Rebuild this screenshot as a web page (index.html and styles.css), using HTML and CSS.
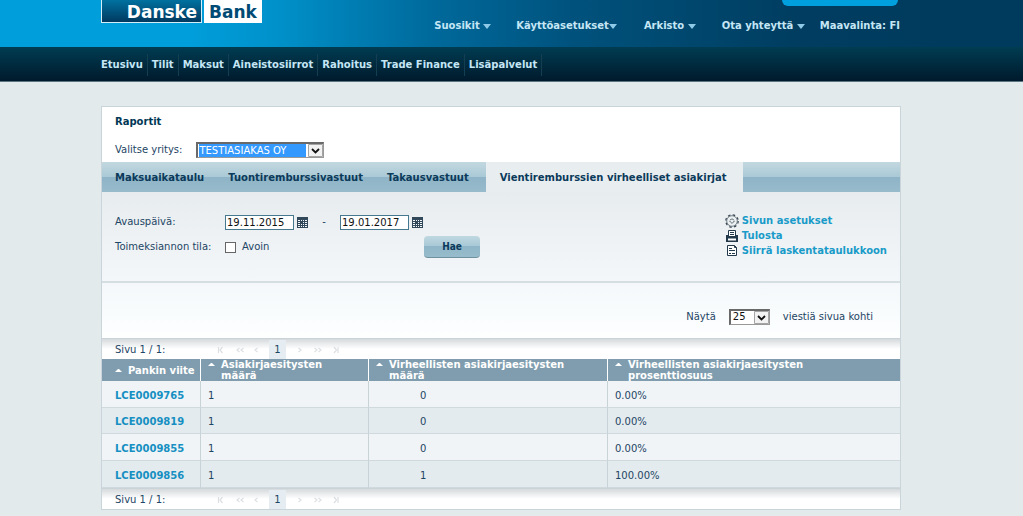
FILE: index.html
```html
<!DOCTYPE html>
<html lang="fi">
<head>
<meta charset="utf-8">
<title>Danske Bank - Raportit</title>
<link rel="stylesheet" href="styles.css">
</head>
<body>
<svg class="defs" aria-hidden="true">
  <symbol id="calendar" viewBox="0 0 11 11"><path d="M0 0h11v11H0z" fill="#31485b"/><path d="M1 3h2v1H1zm3 0h1v1H4zm2 0h1v1H6zm2 0h2v1H8zM1 5h2v1H1zm5 0h1v1H6zm2 0h2v1H8zM1 7h2v1H1zm3 0h1v1H4zm2 0h1v1H6zm2 0h2v1H8zM1 9h2v1H1zm3 0h1v1H4zm2 0h1v1H6zm2 0h2v1H8z" fill="#f4f8fa"/></symbol>
  <symbol id="chevron" viewBox="0 0 15 13"><path d="M.5.5h14v12H.5z" fill="#f2f2f2" stroke="#a5a5a5"/><path d="M4 5l3.500 3.500L11 5" fill="none" stroke="#111" stroke-width="1.800"/></symbol>
  <symbol id="pager" viewBox="0 0 122 8"><g fill="none" stroke="#dcdfe2" stroke-width="1.200"><path d="M1.500 1v6M5.500 1L3 4l2.500 3M22.500 2L20 4l2.500 2M26.500 2L24 4l2.500 2M40.500 2L38 4l2.500 2M81.500 2L84 4l-2.500 2M97.500 2l2.500 2-2.500 2M101.500 2l2.500 2-2.500 2M117 1l2.500 3L117 7M121 1v6"/></g></symbol>
</svg>
<header class="top">
  <div class="wrap top-row">
    <a class="logo" href="#"><span class="logo-danske">Danske</span><span class="logo-bank">Bank</span></a>
    <div class="top-right">
      <span class="logoff"></span>
      <nav class="tools">
        <a class="t1" href="#">Suosikit <i class="down"></i></a>
        <a class="t2" href="#">Käyttöasetukset<i class="down"></i></a>
        <a class="t3" href="#">Arkisto <i class="down"></i></a>
        <a class="t4" href="#">Ota yhteyttä <i class="down"></i></a>
        <a href="#">Maavalinta: FI</a>
      </nav>
    </div>
  </div>
</header>
<div class="mainnav">
  <nav class="wrap links">
    <a href="#">Etusivu</a><a href="#">Tilit</a><a href="#">Maksut</a><a href="#">Aineistosiirrot</a><a href="#">Rahoitus</a><a href="#">Trade Finance</a><a href="#">Lisäpalvelut</a>
  </nav>
</div>
<div class="wrap">
  <main class="panel">
    <section class="head">
      <h1>Raportit</h1>
      <div class="company">
        <label for="company">Valitse yritys:</label>
        <span class="pick"><select id="company" class="wide"><option>TESTIASIAKAS OY</option></select><svg class="chev"><use href="#chevron"/></svg></span>
      </div>
    </section>
    <nav class="tabs">
      <a href="#">Maksuaikataulu</a><a href="#">Tuontiremburssivastuut</a><a href="#">Takausvastuut</a><a class="active" href="#">Vientiremburssien virheelliset asiakirjat</a>
    </nav>
    <section class="filter">
      <form class="fields">
        <div class="field-row">
          <label class="lab" for="from">Avauspäivä:</label>
          <input class="date" id="from" type="text" value="19.11.2015"><button class="cal" type="button" aria-label="Kalenteri"><svg><use href="#calendar"/></svg></button>
          <span class="dash">-</span>
          <input class="date" type="text" aria-label="Avauspäivä" value="19.01.2017"><button class="cal" type="button" aria-label="Kalenteri"><svg><use href="#calendar"/></svg></button>
        </div>
        <div class="field-row second">
          <span class="lab">Toimeksiannon tila:</span>
          <input class="tick" id="open" type="checkbox"><label class="open" for="open">Avoin</label>
          <button class="search" type="button">Hae</button>
        </div>
      </form>
      <div class="actions">
        <a href="#"><svg viewBox="0 0 14 14"><g fill="none" stroke="#33414d"><circle cx="7" cy="7" r="6.200" stroke-width="1.200" stroke-dasharray="2.500 2.370"/><circle cx="7" cy="7" r="5.300" stroke="#56636d" stroke-width=".8"/><circle cx="7" cy="7" r="2" stroke-dasharray="1.500 .7"/></g></svg>Sivun asetukset</a>
        <a href="#"><svg viewBox="0 0 14 14"><path d="M3.500 8V1.500h7V8" fill="#fff" stroke="#24394b"/><path d="M5 3.500h4M5 5.500h4M4 7.500h6" stroke="#24394b"/><path d="M1 6h2v2h8V6h2v7H1z" fill="#24394b"/><path d="M3 9.500h8v2H3z" fill="#fff"/></svg>Tulosta</a>
        <a href="#"><svg viewBox="0 0 14 14"><path d="M2.500 1.500h7l2 2v8h-9z" fill="#fff" stroke="#24394b"/><path d="M9.500 1.500v2h2M4 4.500h3M4 6.500h6M4 9.500h2M7 9.500h3" fill="none" stroke="#24394b"/></svg>Siirrä laskentataulukkoon</a>
      </div>
    </section>
    <section class="perpage">
      <label for="count">Näytä</label>
      <span class="pick"><select id="count"><option>25</option></select><svg class="chev"><use href="#chevron"/></svg></span>
      <span>viestiä sivua kohti</span>
    </section>
    <div class="pager"><span class="pos">Sivu 1 / 1:</span><span class="pages"><svg><use href="#pager"/></svg><b>1</b></span></div>
    <table>
      <colgroup><col class="c1"><col class="c2"><col class="c3"><col></colgroup>
      <thead><tr>
        <th class="first"><div><i class="up"></i>Pankin viite</div></th>
        <th><div><i class="up"></i><span>Asiakirjaesitysten<br>määrä</span></div></th>
        <th><div><i class="up"></i><span>Virheellisten asiakirjaesitysten<br>määrä</span></div></th>
        <th><div><i class="up"></i><span>Virheellisten asiakirjaesitysten<br>prosenttiosuus</span></div></th>
      </tr></thead>
      <tbody>
        <tr><td><a href="#">LCE0009765</a></td><td>1</td><td>0</td><td>0.00%</td></tr>
        <tr><td><a href="#">LCE0009819</a></td><td>1</td><td>0</td><td>0.00%</td></tr>
        <tr><td><a href="#">LCE0009855</a></td><td>1</td><td>0</td><td>0.00%</td></tr>
        <tr><td><a href="#">LCE0009856</a></td><td>1</td><td>1</td><td>100.00%</td></tr>
      </tbody>
    </table>
    <div class="pager"><span class="pos">Sivu 1 / 1:</span><span class="pages"><svg><use href="#pager"/></svg><b>1</b></span></div>
  </main>
</div>
</body>
</html>
```
FILE: styles.css
```css
* { box-sizing: border-box; }
body {
  margin: 0;
  background: #e2eaec;
  color: #1d4564;
  font: 10px/14px "DejaVu Sans", Verdana, sans-serif;
}
a { color: inherit; text-decoration: none; }
button, input, select { font: inherit; margin: 0; border-radius: 0; }
.defs { display: none; }
.wrap { max-width: 821px; margin: 0 auto; padding-right: 21px; }

.top {
  height: 47px;
  background: linear-gradient(90deg, #009fdc 0, #009fdc 18%, #0091ca 27%, #006a9c 42%, #00527d 56%, #003d60 78%, #003a5c 100%);
}
.top-row { display: flex; justify-content: space-between; }
.logo { display: flex; gap: 2px; height: 23px; font-size: 17px; font-weight: bold; line-height: 24px; }
.logo-danske {
  width: 101px;
  padding-right: 4px;
  text-align: right;
  color: #fff;
  background: linear-gradient(#00719f, #003a60);
  border: 1px solid #d5edf7;
  border-top: 0;
}
.logo-bank { width: 58px; text-align: center; color: #004b74; background: #fff; }
.top-right { display: flex; flex-direction: column; align-items: flex-end; }
.logoff { width: 116px; height: 6px; margin-right: 3px; background: #00a0df; border-radius: 0 0 6px 6px; }
.tools { display: flex; padding-top: 13px; padding-right: 1px; font-weight: bold; color: #c5e6f5; }
.tools a { white-space: nowrap; }
.down {
  display: inline-block;
  border: 4px solid transparent;
  border-top: 5px solid #8fcbe8;
  border-bottom: 0;
  vertical-align: middle;
}
.t1 { margin-right: 25px; }
.t2 { margin-right: 27px; }
.t3 { margin-right: 26px; }
.t4 { margin-right: 15px; }

.mainnav {
  height: 35px;
  border-bottom: 1px solid #5c7582;
  background: linear-gradient(#003c52, #001a2c);
}
.links { display: flex; padding-top: 7px; font-weight: bold; color: #c5e6f5; }
.links a { padding: 0 4px; line-height: 22px; border-right: 1px solid #143f52; white-space: nowrap; }
.links a:first-child { padding-left: 0; }

.panel { margin-top: 24px; border: 1px solid #c9d5da; background: #fff; }
.head { padding: 8px 13px 4px; }
h1 { margin: 0; font-size: 10px; color: #003755; line-height: 14px; }
.company { display: flex; align-items: center; gap: 14px; padding-top: 13px; }
.pick { position: relative; display: inline-flex; }
.pick select {
  appearance: none;
  width: 41px;
  height: 16px;
  padding: 0 17px 0 2px;
  line-height: 12px;
  color: #111;
  background: #fff;
  border: 1px solid #999;
  border-top: 2px solid #696969;
  border-left: 2px solid #696969;
}
.pick .wide {
  width: 128px;
  padding: 0 17px 0 1px;
  color: #fff;
  background: linear-gradient(#39f, #39f) no-repeat content-box, #fff;
}
.chev { position: absolute; right: 1px; top: 2px; width: 15px; height: 13px; pointer-events: none; }

.tabs {
  display: flex;
  font-weight: bold;
  color: #0b3a5a;
  background: linear-gradient(#c3d8e0, #a9c9d6 50%, #8fb4c7 50%, #97bbcb);
}
.tabs a { padding: 9px 12px 7px; white-space: nowrap; }
.tabs a:first-child { padding-left: 13px; }
.tabs a:nth-child(3) { padding-right: 17px; }
.tabs a.active { padding-left: 14px; padding-right: 16px; background: #e8edf0; }

.filter {
  display: flex;
  justify-content: space-between;
  min-height: 91px;
  padding: 21px 13px 0;
  background: linear-gradient(#e7ecef, #f4f7f9);
  border-bottom: 2px solid #d5dee2;
}
.field-row { display: flex; align-items: center; height: 18px; }
.second { margin-top: 4px; height: 24px; }
.lab { width: 110px; }
.date { width: 69px; height: 15px; padding: 0 1px; color: #111; background: #fff; border: 1px solid #467990; }
.cal { display: flex; margin-left: 3px; padding: 0; border: 0; background: none; }
.cal svg { width: 11px; height: 11px; }
.dash { width: 32px; text-align: center; }
.tick { appearance: none; width: 11px; height: 11px; background: #fff; border: 1px solid #666; }
.open { width: 188px; padding-left: 6px; }
.search {
  width: 56px;
  height: 22px;
  padding: 0;
  font: bold 10px/20px "DejaVu Sans Condensed", "DejaVu Sans", sans-serif;
  color: #0b3a5a;
  border: 0;
  border-bottom: 1px solid #6f919f;
  border-radius: 4px;
  background: linear-gradient(#c0d8e1, #a6c8d5 50%, #8fb6c8 50%, #97bccb);
}
.actions { font-weight: bold; color: #199bc9; }
.actions a { display: flex; align-items: center; gap: 3px; height: 15px; }
.actions svg { width: 14px; height: 14px; }

.perpage {
  display: flex;
  justify-content: flex-end;
  align-items: center;
  gap: 13px;
  height: 55px;
  padding: 12px 27px 0 0;
  background: linear-gradient(#f4f8fa, #fdffff);
}
.pager {
  display: flex;
  height: 21px;
  padding-top: 1px;
  border-top: 1px solid #c9d3d8;
  background: linear-gradient(#d6dadc, #fff 50%);
  line-height: 19px;
}
.pos { width: 101px; padding-left: 13px; }
.pages { position: relative; display: flex; padding: 0 14px; }
.pages svg { width: 122px; height: 8px; margin-top: 6px; }
.pages b { position: absolute; left: 66px; top: 0; width: 17px; text-align: center; font-weight: normal; background: #e5edf2; }

table { width: 100%; border-collapse: separate; border-spacing: 0; table-layout: fixed; }
.c1 { width: 99px; }
.c2 { width: 168px; }
.c3 { width: 239px; }
th {
  height: 22px;
  padding: 0 0 0 7px;
  color: #fff;
  background: #7f9dae;
  text-align: left;
  line-height: 11px;
  border-right: 1px solid #fff;
}
th:last-child, td:last-child { border-right: 0; }
th div { display: flex; gap: 6px; white-space: nowrap; }
.first { padding-left: 13px; }
.up { width: 7px; height: 3px; margin-top: 4px; border: 3px solid transparent; border-top: 0; border-bottom-color: #fff; }
td { height: 27px; padding: 3px 7px 0; background: #f0f4f7; border-right: 1px solid #c8d3d8; border-bottom: 1px solid #d0d9dd; }
tr:nth-child(even) td { background: #e4ebee; }
tr:nth-child(2) td { height: 26px; }
td:first-child { padding-left: 13px; font-weight: bold; color: #168fc2; }
td:nth-child(3) { padding-left: 51px; }
```
